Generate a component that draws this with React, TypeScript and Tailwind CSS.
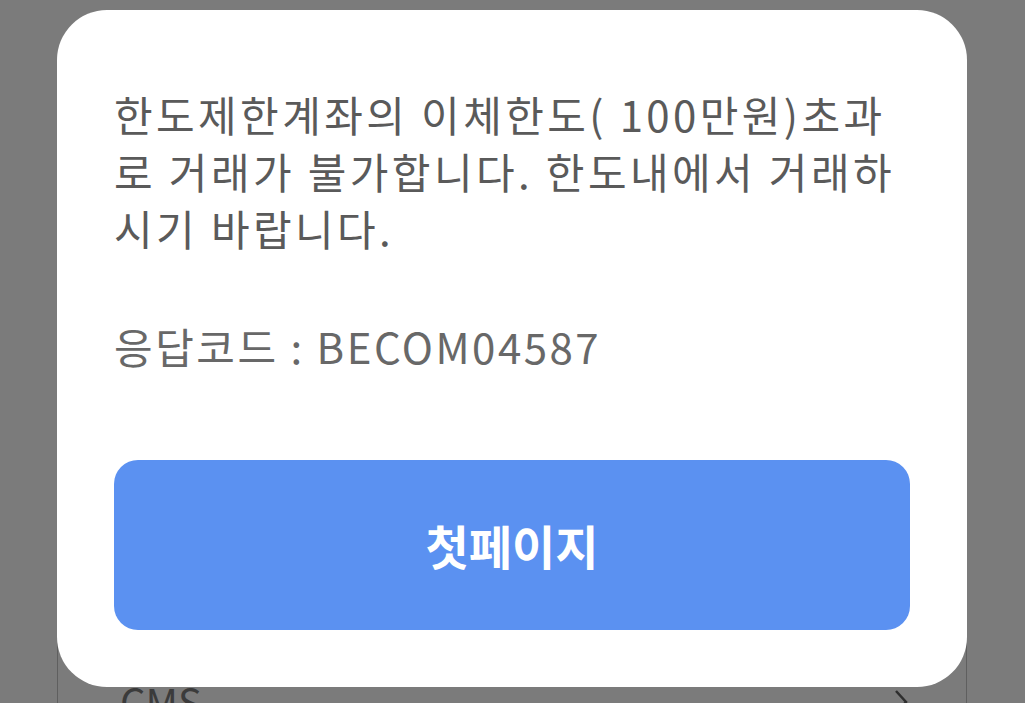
import React from 'react';

export default function App() {
  return (
    <div
      className="relative w-[1025px] h-[703px] overflow-hidden bg-[#7b7b7b]"
      style={{ fontFamily: '"Noto Sans CJK KR", "Noto Sans", sans-serif' }}
    >
      {/* page content under the dimmed overlay */}
      <div className="pt-[640px] pl-[57px] pr-[58px]">
        <div className="h-[120px] border-x border-t border-[#5f5f5f] flex items-start justify-between pl-[62px] pr-[58px] pt-[40px]">
          <span className="text-[40px] leading-none text-[#3b3b3b]">CMS</span>
          <svg width="14" height="26" viewBox="0 0 14 26" className="mt-[8px]">
            <path d="M2 2 L12 13 L2 24" fill="none" stroke="#2e2e2e" strokeWidth="2.5" />
          </svg>
        </div>
      </div>

      {/* alert dialog */}
      <div className="absolute left-[57px] top-[10px] w-[910px] h-[677px] bg-white rounded-[50px] px-[57px] pt-[75px] pb-[57px] flex flex-col">
        <p className="text-[42px] leading-[57px] text-[#5a5a5a] tracking-[3.4px] whitespace-nowrap">
          한도제한계좌의 이체한도( 100만원)초과
          <br />
          로 거래가 불가합니다. 한도내에서 거래하
          <br />
          시기 바랍니다.
        </p>
        <p className="mt-[61px] text-[42px] leading-[57px] text-[#686868] tracking-[2.5px]">응답코드 : BECOM04587</p>
        <button className="mt-auto h-[170px] w-full rounded-[24px] bg-[#5b91f1] text-white text-[47px] font-bold">
          첫페이지
        </button>
      </div>
    </div>
  );
}
